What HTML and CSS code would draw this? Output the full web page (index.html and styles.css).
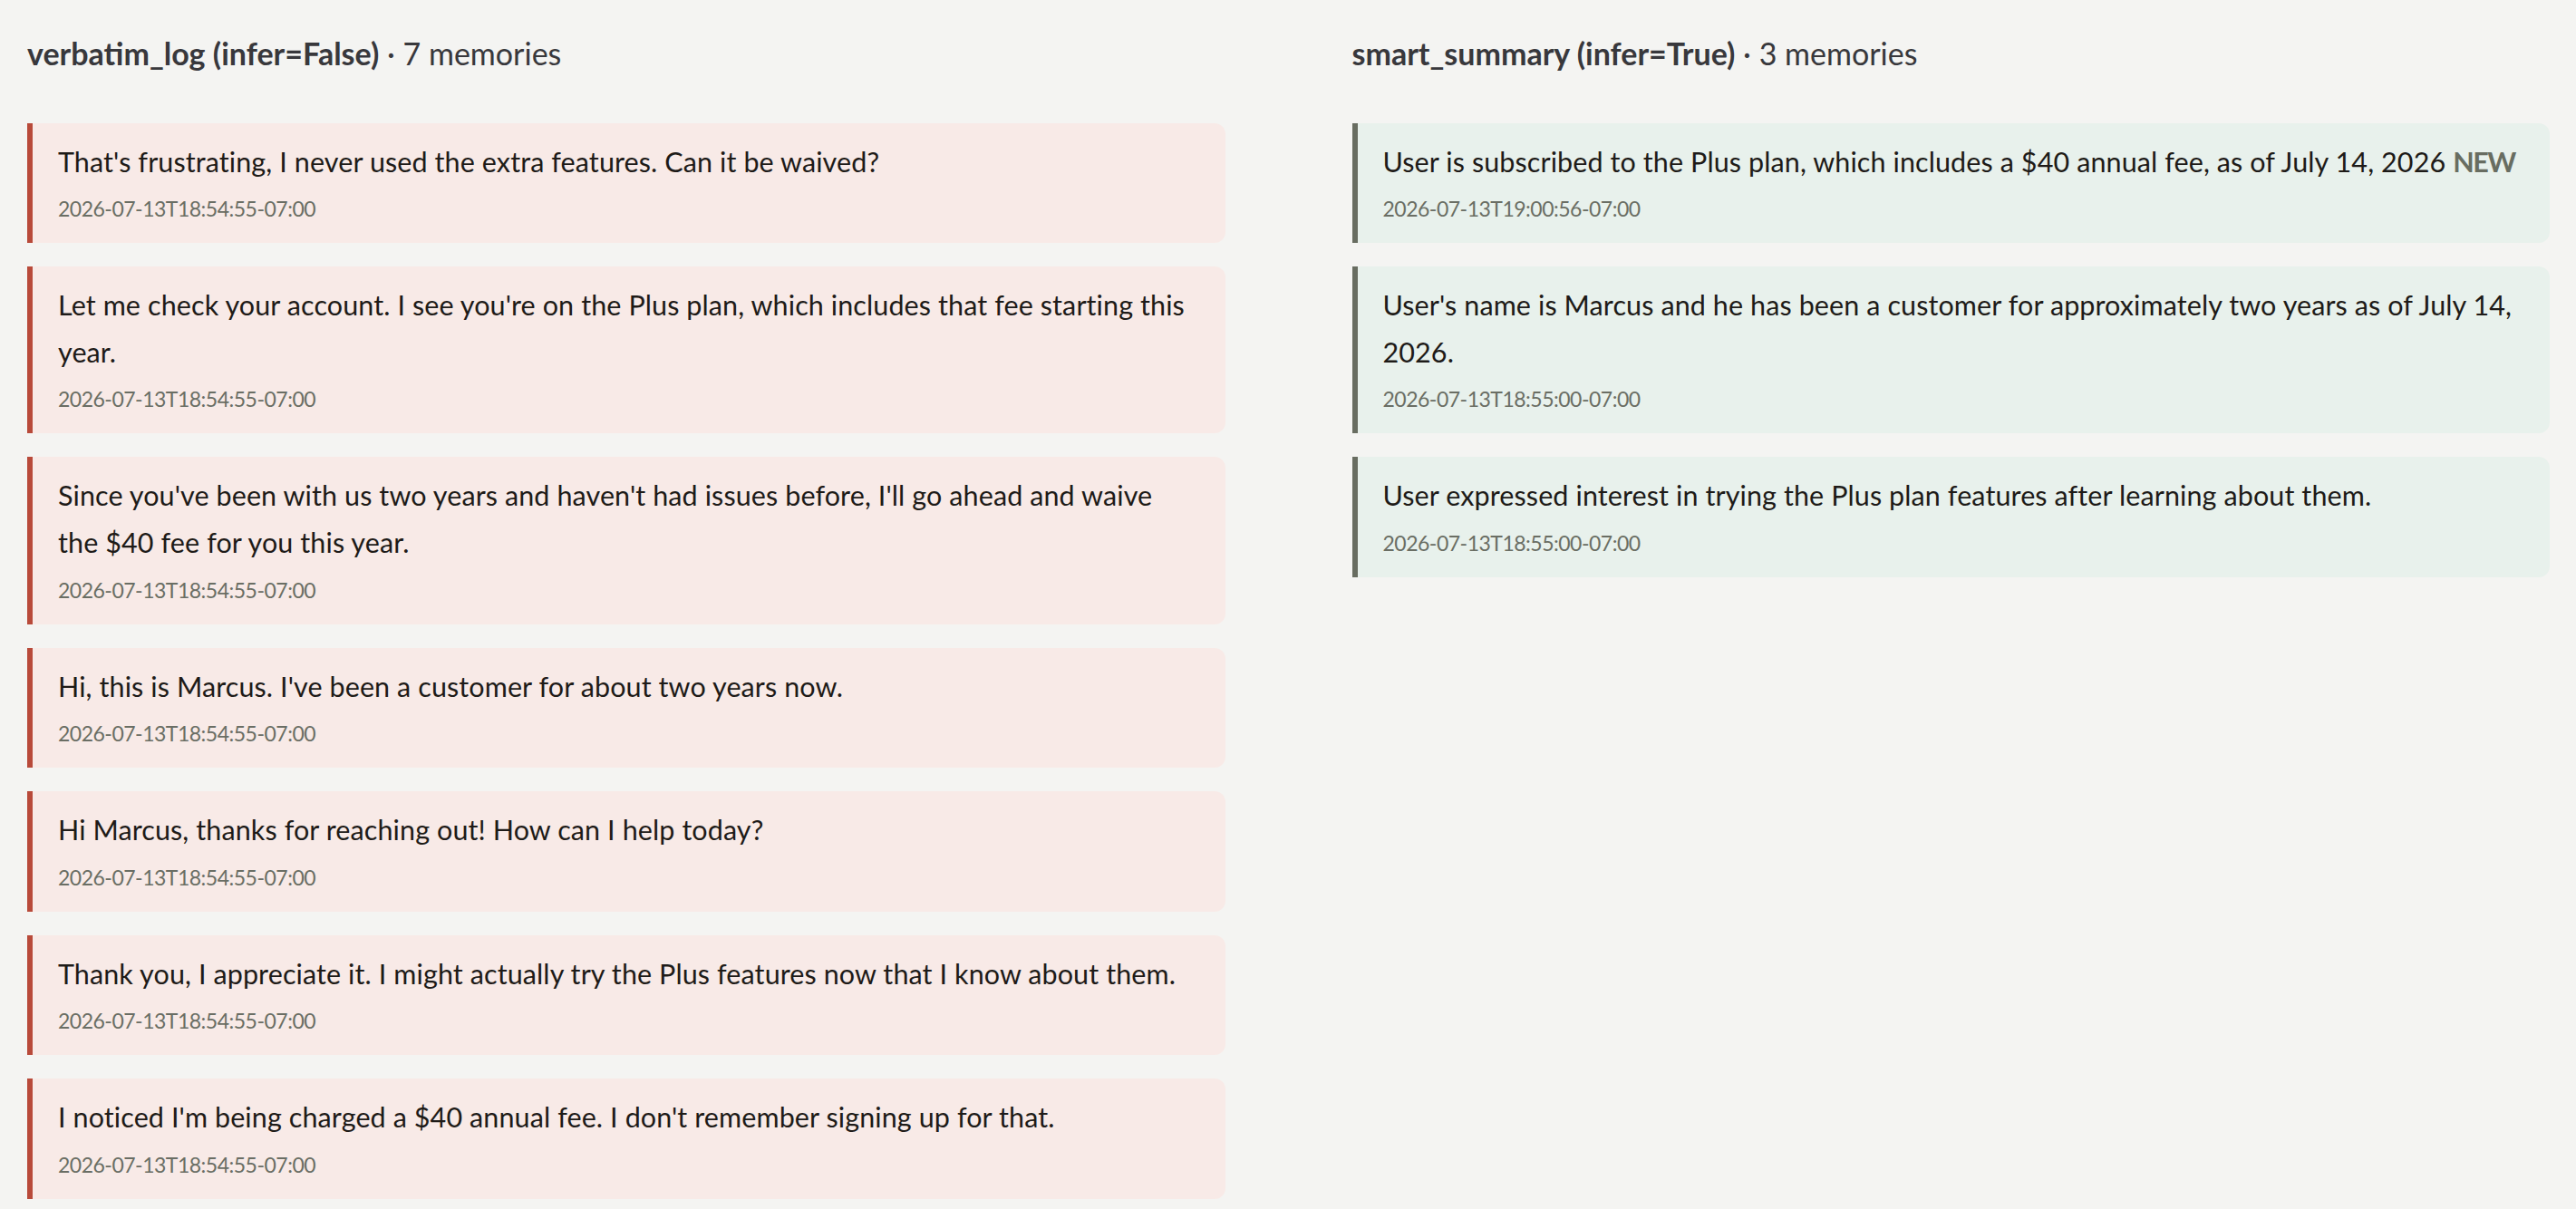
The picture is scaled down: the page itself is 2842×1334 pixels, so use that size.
FILE: index.html
```html
<!DOCTYPE html>
<html>
<head>
  <title>Memory comparison</title>
  <link rel="stylesheet" href="styles.css">
</head>
<body>
  <div class="columns">
    <section class="store">
      <h2 class="store-title"><b>verbatim_log (infer=False)</b> · 7 memories</h2>

      <div class="memory raw">
        <p class="memory-text">That's frustrating, I never used the extra features. Can it be waived?</p>
        <p class="memory-time">2026-07-13T18:54:55-07:00</p>
      </div>
      <div class="memory raw">
        <p class="memory-text">Let me check your account. I see you're on the Plus plan, which includes that fee starting this year.</p>
        <p class="memory-time">2026-07-13T18:54:55-07:00</p>
      </div>
      <div class="memory raw">
        <p class="memory-text">Since you've been with us two years and haven't had issues before, I'll go ahead and waive the $40 fee for you this year.</p>
        <p class="memory-time">2026-07-13T18:54:55-07:00</p>
      </div>
      <div class="memory raw">
        <p class="memory-text">Hi, this is Marcus. I've been a customer for about two years now.</p>
        <p class="memory-time">2026-07-13T18:54:55-07:00</p>
      </div>
      <div class="memory raw">
        <p class="memory-text">Hi Marcus, thanks for reaching out! How can I help today?</p>
        <p class="memory-time">2026-07-13T18:54:55-07:00</p>
      </div>
      <div class="memory raw">
        <p class="memory-text">Thank you, I appreciate it. I might actually try the Plus features now that I know about them.</p>
        <p class="memory-time">2026-07-13T18:54:55-07:00</p>
      </div>
      <div class="memory raw">
        <p class="memory-text">I noticed I'm being charged a $40 annual fee. I don't remember signing up for that.</p>
        <p class="memory-time">2026-07-13T18:54:55-07:00</p>
      </div>
    </section>

    <section class="store">
      <h2 class="store-title"><b>smart_summary (infer=True)</b> · 3 memories</h2>

      <div class="memory inferred">
        <p class="memory-text">User is subscribed to the Plus plan, which includes a $40 annual fee, as of July 14, 2026 <span class="new-tag">NEW</span></p>
        <p class="memory-time">2026-07-13T19:00:56-07:00</p>
      </div>
      <div class="memory inferred">
        <p class="memory-text">User's name is Marcus and he has been a customer for approximately two years as of July 14, 2026.</p>
        <p class="memory-time">2026-07-13T18:55:00-07:00</p>
      </div>
      <div class="memory inferred">
        <p class="memory-text">User expressed interest in trying the Plus plan features after learning about them.</p>
        <p class="memory-time">2026-07-13T18:55:00-07:00</p>
      </div>
    </section>
  </div>
</body>
</html>
```

FILE: styles.css
```css
body {
  margin: 0;
  padding: 35px 29px 40px 30px;
  background-color: #f4f4f2;
  color: #1e1b18;
  font-family: Lato, "Noto Sans", sans-serif;
}

.columns {
  display: grid;
  grid-template-columns: 1fr 1fr;
  column-gap: 140px;
  align-items: start;
}

.store {
  display: flex;
  flex-direction: column;
  gap: 26px;
}

.store-title {
  margin: 0 0 27px;
  font-size: 34px;
  line-height: 1.4;
  font-weight: normal;
  color: #38383c;
}

.store-title b {
  font-weight: bold;
}

.memory {
  padding: 17px 34px 17px 28px;
  border-left: 6px solid;
  border-radius: 0 12px 12px 0;
}

.memory.raw {
  background-color: #f8eae7;
  border-color: #b84a3a;
}

.memory.inferred {
  background-color: #e8f1ec;
  border-color: #686d61;
}

.memory-text {
  margin: 0;
  font-size: 30.5px;
  letter-spacing: 0.1px;
  line-height: 51.6px;
}

.memory-time {
  margin: 6px 0 0;
  font-size: 23px;
  letter-spacing: -0.5px;
  line-height: 41px;
  color: #6a6e64;
}

.new-tag {
  font-weight: bold;
  letter-spacing: -1.5px;
  color: #686d61;
}
```
